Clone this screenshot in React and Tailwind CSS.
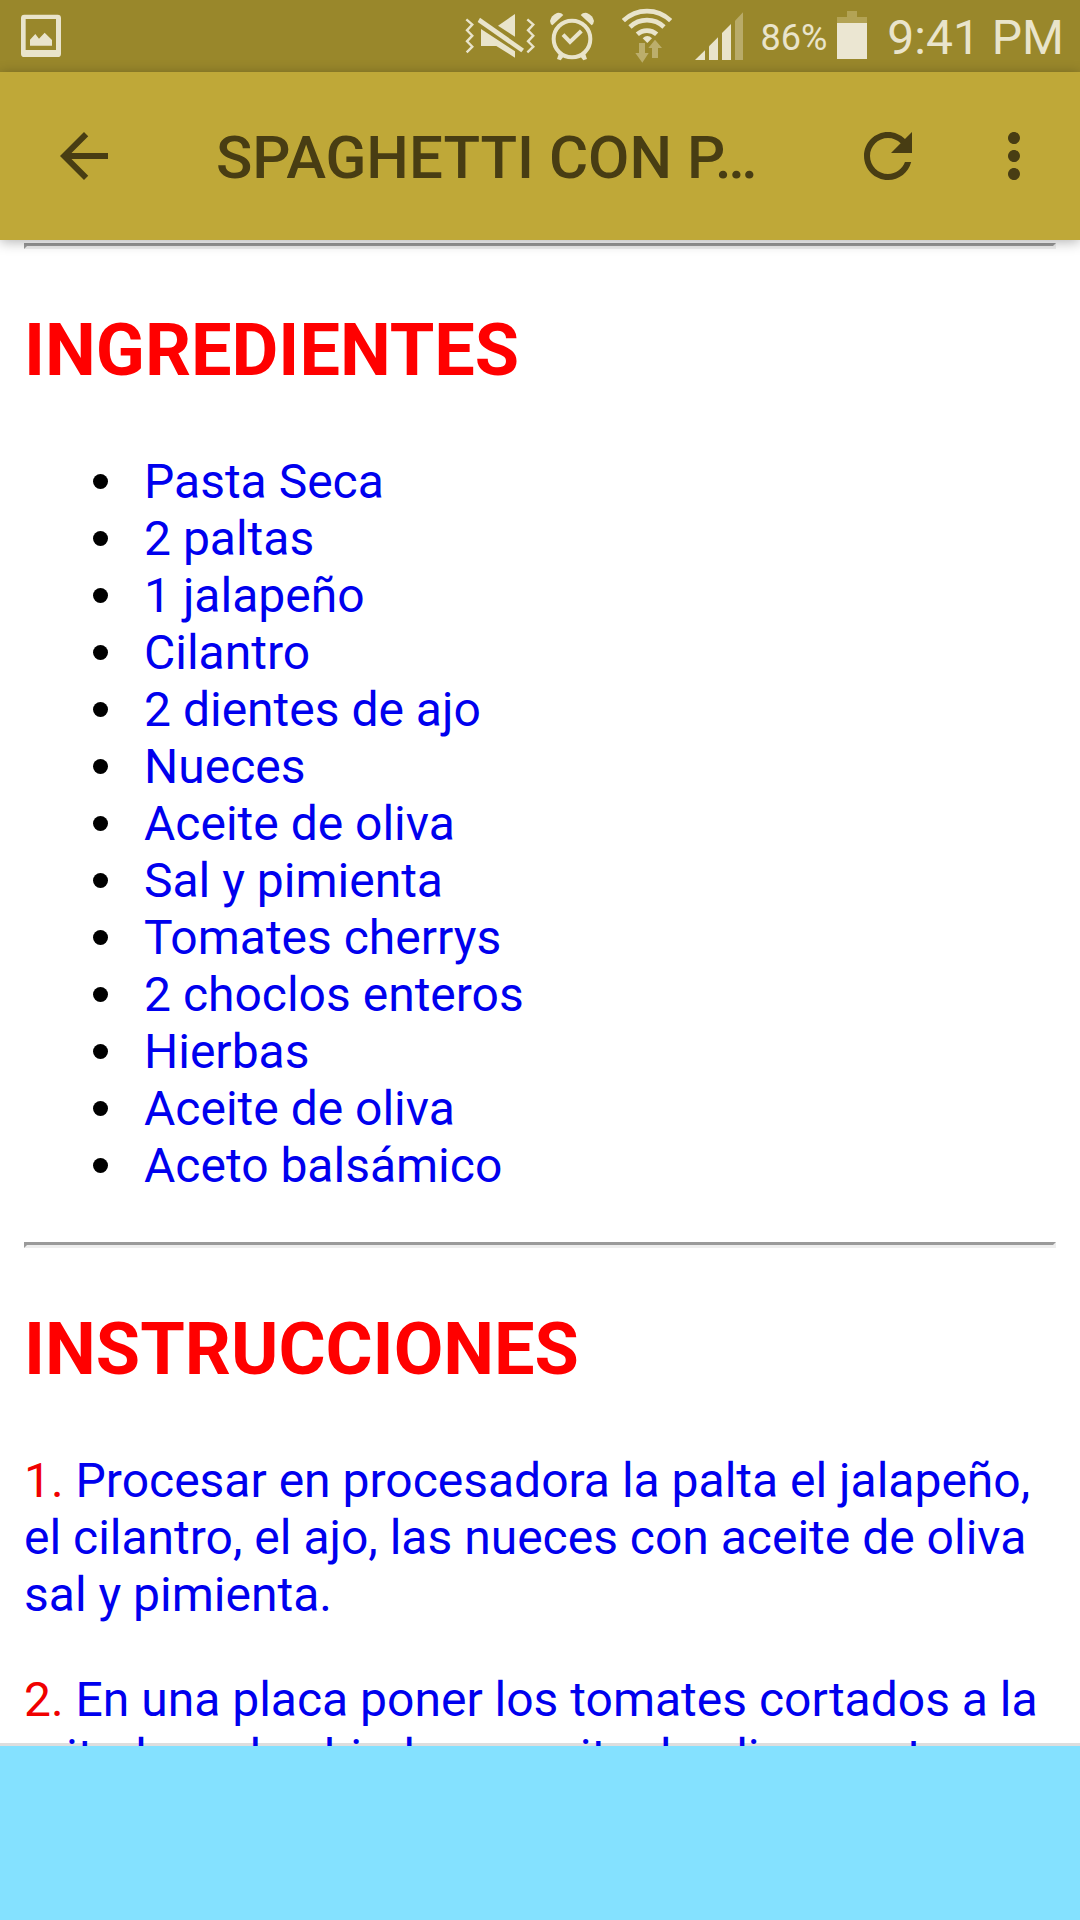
const ingredients = [
  'Pasta Seca',
  '2 paltas',
  '1 jalapeño',
  'Cilantro',
  '2 dientes de ajo',
  'Nueces',
  'Aceite de oliva',
  'Sal y pimienta',
  'Tomates cherrys',
  '2 choclos enteros',
  'Hierbas',
  'Aceite de oliva',
  'Aceto balsámico',
];

const steps = [
  'Procesar en procesadora la palta el jalapeño, el cilantro, el ajo, las nueces con aceite de oliva sal y pimienta.',
  'En una placa poner los tomates cortados a la mitad con las hierbas, aceite de oliva, aceto balsámico.',
];

function PictureIcon() {
  return (
    <svg className="h-[72px] w-10" viewBox="0 0 120 216" aria-hidden="true">
      <path
        fill="#e9e4cb"
        fillRule="evenodd"
        d="M10 44H110Q120 44 120 54V161Q120 171 110 171H10Q0 171 0 161V54Q0 44 10 44ZM14 57V150H105V57Z"
      />
      <path fill="#e9e4cb" d="M27 137V119L43 102L54 116L71 98L93 120V137Z" />
    </svg>
  );
}

function MuteIcon() {
  return (
    <svg className="h-[72px] w-[70px]" viewBox="45 0 210 216" aria-hidden="true">
      <g fill="none" stroke="#e9e4cb" strokeWidth="7">
        <path d="M49 58L67 74L51 91L67 107L51 124L67 140L50 157" />
        <path d="M232 58L250 74L234 91L250 107L234 124L250 140L232 157" />
      </g>
      <g fill="#e9e4cb">
        <path d="M195 42V110L144 77Z" />
        <path d="M93 87L195 154V173L139 138H93Z" />
        <path d="M90 53L222 146L214 157L83 66Z" />
      </g>
    </svg>
  );
}

function AlarmIcon() {
  return (
    <svg className="h-[72px] w-11" viewBox="300 0 132 216" aria-hidden="true">
      <circle cx="366" cy="117" r="55" fill="none" stroke="#e9e4cb" strokeWidth="12" />
      <path d="M339 104L360 126L394 93" fill="none" stroke="#e9e4cb" strokeWidth="12" />
      <g fill="#e9e4cb">
        <path d="M307 76L340 45Q333 37 321 39Q303 47 300 63Q301 72 307 76Z" />
        <path d="M425 76L392 45Q399 37 411 39Q429 47 432 63Q431 72 425 76Z" />
        <path d="M327 160L343 167L332 181L321 177Z" />
        <path d="M405 160L389 167L400 181L411 177Z" />
      </g>
    </svg>
  );
}

function WifiIcon() {
  return (
    <svg className="h-[72px] w-[50px]" viewBox="516 0 150 216" aria-hidden="true">
      <g fill="none" stroke="#e9e4cb" strokeWidth="14">
        <path d="M520 62A102 102 0 0 1 662 62" />
        <path d="M540 81A74 74 0 0 1 642 81" />
        <path d="M562 103A43 43 0 0 1 620 103" />
      </g>
      <path fill="#e9e4cb" d="M578 115Q592 101 606 115L592 129Z" />
      <g fill="#bcae6c">
        <path d="M567 129H585V159H596L577 188L556 159H567Z" />
        <path d="M606 174V144H595L615 119L636 144H624V174Z" />
      </g>
    </svg>
  );
}

function SignalIcon() {
  return (
    <svg className="h-[72px] w-[49px]" viewBox="735 0 147 216" aria-hidden="true">
      <g fill="#e9e4cb">
        <path d="M735 180L765 151V180Z" />
        <path d="M777 180V139L804 112V180Z" />
        <path d="M816 180V99L843 72V180Z" />
      </g>
      <path fill="#b9ab69" d="M855 180V62L879 37V180Z" />
    </svg>
  );
}

function BatteryIcon() {
  return (
    <svg className="h-[72px] w-[30px]" viewBox="0 0 90 216" aria-hidden="true">
      <path fill="#b3a355" d="M30 33H60V51H90V69H0V51H30Z" />
      <path fill="#ebe6d2" d="M0 69H90V177H0Z" />
    </svg>
  );
}

function Rule() {
  return (
    <hr className="h-[6px] border-[3px] border-t-[#9a9a9a] border-r-[#eeeeee] border-b-[#eeeeee] border-l-[#9a9a9a]" />
  );
}

export default function App() {
  return (
    <div className="flex h-screen flex-col overflow-hidden bg-white font-[Roboto,sans-serif]">
      <div className="flex h-[72px] shrink-0 items-center justify-between bg-[#99872b] pr-4 pl-[21px] text-[#e9e4cb]">
        <PictureIcon />
        <div className="flex items-center">
          <MuteIcon />
          <div className="ml-[15px]"><AlarmIcon /></div>
          <div className="ml-7"><WifiIcon /></div>
          <div className="ml-[23px]"><SignalIcon /></div>
          <span className="ml-[17px] pt-1 text-4xl">86%</span>
          <div className="ml-[10px]"><BatteryIcon /></div>
          <span className="ml-5 pt-1 text-5xl">9:41 PM</span>
        </div>
      </div>

      <header className="relative z-10 flex h-[168px] shrink-0 items-center bg-[#bfa838] pr-[30px] pl-12 text-[#483d13] shadow-[0_2px_12px_rgba(0,0,0,0.3)]">
        <button type="button" aria-label="Volver" className="size-[72px]">
          <svg className="size-[72px]" viewBox="0 0 24 24" fill="currentColor">
            <path d="M20 11H7.83l5.59-5.59L12 4l-8 8 8 8 1.41-1.41L7.83 13H20v-2z" />
          </svg>
        </button>
        <h1 className="ml-24 flex-1 truncate pt-1 text-6xl leading-[72px] font-medium">SPAGHETTI CON P…</h1>
        <button type="button" aria-label="Actualizar" className="size-[72px]">
          <svg className="size-[72px]" viewBox="0 0 24 24" fill="currentColor">
            <path d="M17.65 6.35C16.2 4.9 14.21 4 12 4c-4.42 0-7.99 3.58-7.99 8s3.57 8 7.99 8c3.73 0 6.84-2.55 7.73-6h-2.08c-.82 2.33-3.04 4-5.65 4-3.31 0-6-2.69-6-6s2.69-6 6-6c1.66 0 3.14.69 4.22 1.78L13 11h7V4l-2.35 2.35z" />
          </svg>
        </button>
        <button type="button" aria-label="Más opciones" className="ml-[54px] size-[72px]">
          <svg className="size-[72px]" viewBox="0 0 24 24" fill="currentColor">
            <path d="M12 8c1.1 0 2-.9 2-2s-.9-2-2-2-2 .9-2 2 .9 2 2 2zm0 2c-1.1 0-2 .9-2 2s.9 2 2 2 2-.9 2-2-.9-2-2-2zm0 6c-1.1 0-2 .9-2 2s.9 2 2 2 2-.9 2-2-.9-2-2-2z" />
          </svg>
        </button>
      </header>

      <main className="min-h-0 flex-1 overflow-hidden px-6 pt-[3px] text-5xl leading-[57px] text-[#0000ee] shadow-[inset_0_-3px_0_#dedede]">
        <Rule />
        <h2 className="my-[60px] text-7xl leading-[84px] font-bold text-[#ff0000]">INGREDIENTES</h2>
        <ul className="mb-12">
          {ingredients.map((item, i) => (
            <li key={i} className="flex items-center pl-[69px]">
              <span className="mr-9 size-[15px] rounded-full bg-black" />
              {item}
            </li>
          ))}
        </ul>
        <Rule />
        <h2 className="my-[60px] text-7xl leading-[84px] font-bold text-[#ff0000]">INSTRUCCIONES</h2>
        {steps.map((step, i) => (
          <p key={i} className="mb-12">
            <span className="text-[#f00000]">{i + 1}.</span> {step}
          </p>
        ))}
      </main>

      <footer className="h-[174px] shrink-0 bg-[#84e1ff]" />
    </div>
  );
}
